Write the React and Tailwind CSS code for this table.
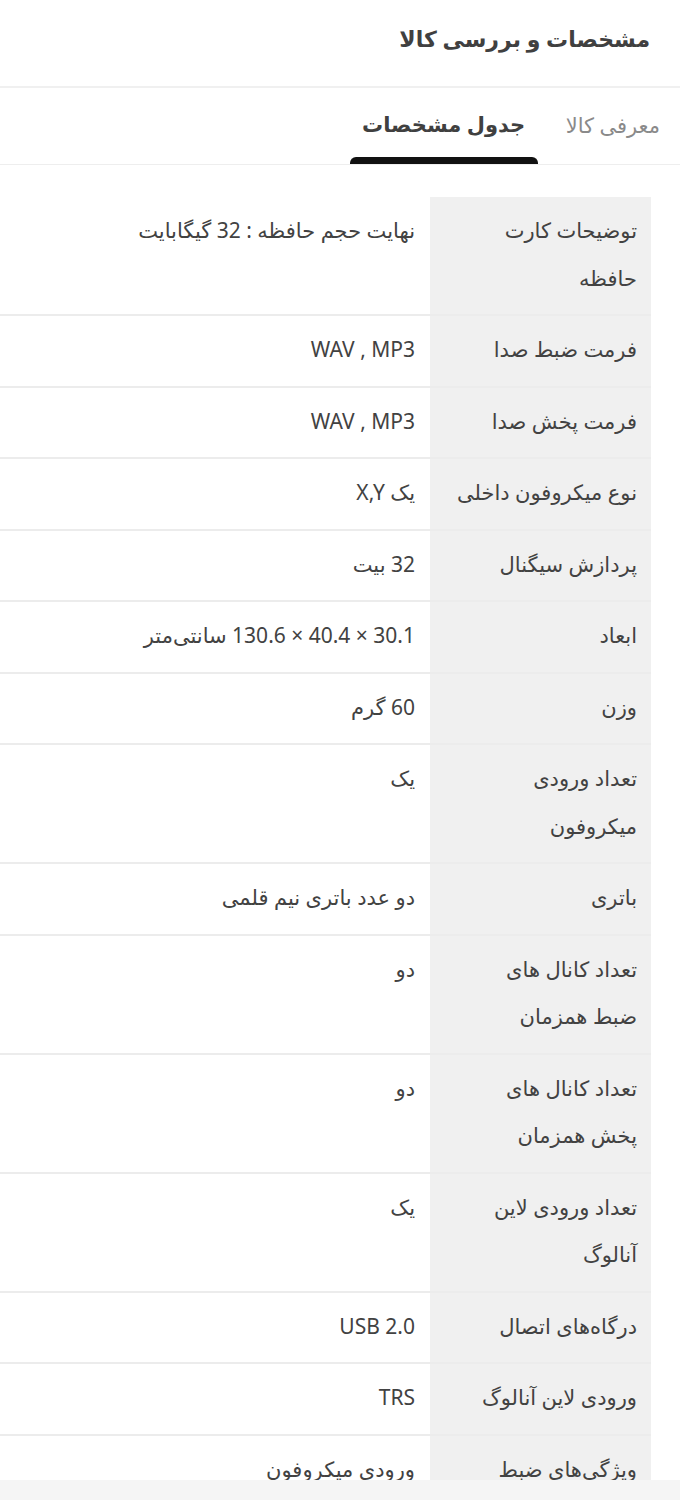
import React from "react";

const specs = [
    { label: "توضیحات کارت\nحافظه", value: "نهایت حجم حافظه : 32 گیگابایت" },
    { label: "فرمت ضبط صدا", value: "WAV , MP3" },
    { label: "فرمت پخش صدا", value: "WAV , MP3" },
    { label: "نوع میکروفون داخلی", value: "یک X,Y" },
    { label: "پردازش سیگنال", value: "32 بیت" },
    { label: "ابعاد", value: "30.1 × 40.4 × 130.6 سانتی‌متر" },
    { label: "وزن", value: "60 گرم" },
    { label: "تعداد ورودی\nمیکروفون", value: "یک" },
    { label: "باتری", value: "دو عدد باتری نیم قلمی" },
    { label: "تعداد کانال های\nضبط همزمان", value: "دو" },
    { label: "تعداد کانال های\nپخش همزمان", value: "دو" },
    { label: "تعداد ورودی لاین\nآنالوگ", value: "یک" },
    { label: "درگاه‌های اتصال", value: "USB 2.0" },
    { label: "ورودی لاین آنالوگ", value: "TRS" },
    { label: "ویژگی‌های ضبط", value: "ورودی میکروفون" },
];

const SpecRow = ({ label, value, last }) => {
    return (
        <div
            className={
                "flex " + (last ? "" : "border-b-2 border-[#ececec]")
            }
        >
            <div className="w-[221px] shrink-0 bg-[#f0f0f0] pr-[14px] pl-2 pt-[10px] pb-[12px] leading-[47.5px] text-[21px] text-[#424242] whitespace-pre-line">
                {label}
            </div>
            <div className="flex-1 pr-[15px] pl-3 pt-[10px] pb-[12px] leading-[47.5px] text-[21px] text-[#424242]">
                {value}
            </div>
        </div>
    );
};

const App = () => {
    return (
        <div
            dir="rtl"
            className="relative bg-white min-h-[1500px] overflow-hidden"
            style={{ fontFamily: '"Noto Sans", "DejaVu Sans", sans-serif' }}
        >
            <div className="h-[88px] flex items-start pt-[22px] pr-[30px] border-b-2 border-[#f0f0f0]">
                <h1 className="text-[22px] font-bold text-[#404040]">
                    مشخصات و بررسی کالا
                </h1>
            </div>

            <div className="flex items-end h-[77px] border-b border-[#eeeeee] pr-[10px]">
                <button className="h-full flex items-center px-[10px] text-[21px] text-[#8a8a8a]">
                    معرفی کالا
                </button>
                <button className="relative h-full flex items-center justify-center w-[188px] mr-[18px] pb-[2px] text-[21px] font-bold text-[#404040]">
                    جدول مشخصات
                    <span className="absolute bottom-0 left-0 right-0 h-[7px] rounded-t-[6px] bg-[#111111]"></span>
                </button>
            </div>

            <div className="mt-[32px] w-[651px] mr-auto">
                {specs.map((s, i) => (
                    <SpecRow
                        key={i}
                        label={s.label}
                        value={s.value}
                        last={i === specs.length - 1}
                    />
                ))}
            </div>

            <div className="fixed bottom-0 left-0 right-0 h-[20px] bg-[#f5f5f5]"></div>
        </div>
    );
};

export default App;
